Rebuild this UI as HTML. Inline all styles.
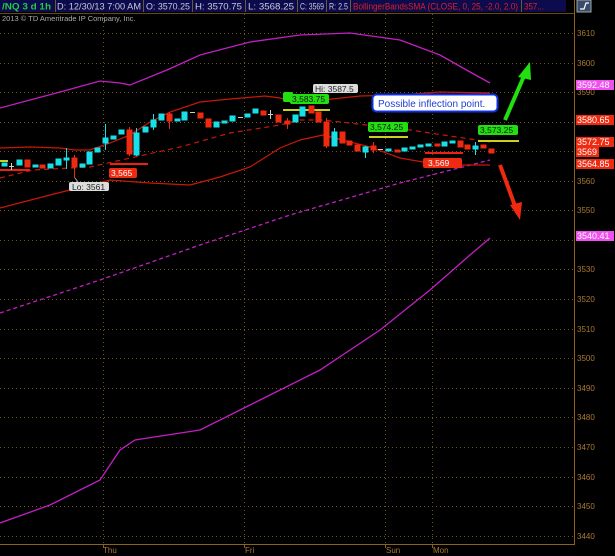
<!DOCTYPE html>
<html><head><meta charset="utf-8"><style>
html,body{margin:0;padding:0;background:#000;width:615px;height:556px;overflow:hidden}
svg{display:block;font-family:"Liberation Sans",sans-serif}
</style></head><body>
<svg width="615" height="556" viewBox="0 0 615 556" xmlns="http://www.w3.org/2000/svg">
<rect width="615" height="556" fill="#000"/>
<rect x="0" y="0" width="566" height="12" fill="#0b0b4e"/>
<g stroke="#6a5a3a" stroke-width="1">
<line x1="55.5" y1="0" x2="55.5" y2="12"/><line x1="143.5" y1="0" x2="143.5" y2="12"/><line x1="192.5" y1="0" x2="192.5" y2="12"/><line x1="245.5" y1="0" x2="245.5" y2="12"/><line x1="297.5" y1="0" x2="297.5" y2="12"/><line x1="326.5" y1="0" x2="326.5" y2="12"/><line x1="350.5" y1="0" x2="350.5" y2="12"/><line x1="521.5" y1="0" x2="521.5" y2="12"/>
</g>
<g font-size="9" fill="#c8c8d8">
<text x="2" y="9.5" fill="#22cc44" font-weight="bold" textLength="49" lengthAdjust="spacingAndGlyphs">/NQ 3 d 1h</text>
<text x="57" y="9.5" textLength="84" lengthAdjust="spacingAndGlyphs">D: 12/30/13 7:00 AM</text>
<text x="146" y="9.5" textLength="44" lengthAdjust="spacingAndGlyphs">O: 3570.25</text>
<text x="195" y="9.5" textLength="47" lengthAdjust="spacingAndGlyphs">H: 3570.75</text>
<text x="248" y="9.5" textLength="46" lengthAdjust="spacingAndGlyphs">L: 3568.25</text>
<text x="300" y="9.5" textLength="24" lengthAdjust="spacingAndGlyphs">C: 3569</text>
<text x="329" y="9.5" textLength="19" lengthAdjust="spacingAndGlyphs">R: 2.5</text>
<text x="353" y="9.5" fill="#e02020" textLength="165" lengthAdjust="spacingAndGlyphs">BollingerBandsSMA (CLOSE, 0, 25, -2.0, 2.0)</text>
<text x="524" y="9.5" fill="#e02020" textLength="20" lengthAdjust="spacingAndGlyphs">357...</text>
</g>
<rect x="577" y="0" width="14" height="12" fill="#3a4a6a" stroke="#9aa" stroke-width="1"/>
<path d="M580 9 L584 9 L586 3 L589 3" stroke="#fff" fill="none" stroke-width="1.2"/>
<line x1="0" y1="13.5" x2="574" y2="13.5" stroke="#6a4a10"/>
<text x="2" y="21" font-size="7.5" fill="#aaa">2013 © TD Ameritrade IP Company, Inc.</text>
<g stroke="#6a5420" stroke-width="1" stroke-dasharray="1,3">
<line x1="0" y1="33.5" x2="574" y2="33.5"/><line x1="0" y1="63.5" x2="574" y2="63.5"/><line x1="0" y1="92.5" x2="574" y2="92.5"/><line x1="0" y1="122.5" x2="574" y2="122.5"/><line x1="0" y1="151.5" x2="574" y2="151.5"/><line x1="0" y1="181.5" x2="574" y2="181.5"/><line x1="0" y1="210.5" x2="574" y2="210.5"/><line x1="0" y1="240.5" x2="574" y2="240.5"/><line x1="0" y1="269.5" x2="574" y2="269.5"/><line x1="0" y1="299.5" x2="574" y2="299.5"/><line x1="0" y1="329.5" x2="574" y2="329.5"/><line x1="0" y1="358.5" x2="574" y2="358.5"/><line x1="0" y1="388.5" x2="574" y2="388.5"/><line x1="0" y1="417.5" x2="574" y2="417.5"/><line x1="0" y1="447.5" x2="574" y2="447.5"/><line x1="0" y1="477.5" x2="574" y2="477.5"/><line x1="0" y1="506.5" x2="574" y2="506.5"/><line x1="0" y1="536.5" x2="574" y2="536.5"/>
<line x1="103.5" y1="14" x2="103.5" y2="544"/><line x1="244.5" y1="14" x2="244.5" y2="544"/><line x1="385.5" y1="14" x2="385.5" y2="544"/><line x1="432.5" y1="14" x2="432.5" y2="544"/>
</g>
<line x1="574.5" y1="0" x2="574.5" y2="545" stroke="#8a6418"/>
<line x1="0" y1="544.5" x2="575" y2="544.5" stroke="#8a6418"/>
<g stroke="#8a6418"><line x1="103.5" y1="544" x2="103.5" y2="548"/><line x1="244.5" y1="544" x2="244.5" y2="548"/><line x1="385.5" y1="544" x2="385.5" y2="548"/><line x1="432.5" y1="544" x2="432.5" y2="548"/></g>
<g font-size="8" fill="#a87a30">
<text x="103" y="553">Thu</text><text x="245" y="553">Fri</text><text x="386" y="553">Sun</text><text x="433" y="553">Mon</text>
<text x="577" y="36">3610</text><text x="577" y="66">3600</text><text x="577" y="95">3590</text><text x="577" y="184">3560</text><text x="577" y="213">3550</text><text x="577" y="272">3530</text><text x="577" y="302">3520</text><text x="577" y="332">3510</text><text x="577" y="361">3500</text><text x="577" y="391">3490</text><text x="577" y="420">3480</text><text x="577" y="450">3470</text><text x="577" y="480">3460</text><text x="577" y="509">3450</text><text x="577" y="539">3440</text>
</g>
<g fill="none" stroke="#c020c0" stroke-width="1.3">
<polyline points="0,108 60,92 100,81 120,83 130,85 167,70 200,55 250,42 300,35 350,33 400,40 440,55 470,72 490,83"/>
<polyline points="0,313 100,280 200,245 290,215 400,183 490,160" stroke-dasharray="4,3"/>
<polyline points="0,523 50,505 100,480 120,450 135,440 200,430 260,400 320,370 380,330 430,290 470,255 490,238"/>
</g>
<g fill="none" stroke="#c81808" stroke-width="1.2">
<polyline points="0,148 30,147 60,148 75,150 90,150 110,143 130,135 150,122 170,112 200,102 230,99 265,96 280,98 300,103 323,100 360,96 400,95 440,92 490,93"/>
<polyline points="0,178 33,170 90,167 180,147 230,133 280,125 300,120 323,120 410,130 490,142" stroke-dasharray="5,4"/>
<polyline points="0,208 50,195 70,190 110,180 150,183 190,185 220,177 250,167 280,148 300,140 323,135 370,147 400,158 440,165 490,165"/>
</g>
<g stroke-width="2">
<line x1="0" y1="161" x2="8" y2="161" stroke="#c8d020"/>
<line x1="0" y1="170" x2="30" y2="170" stroke="#f02010"/>
<line x1="110" y1="164" x2="148" y2="164" stroke="#f02010"/>
<line x1="283" y1="110" x2="330" y2="110" stroke="#c8d020"/>
<line x1="369" y1="137" x2="408" y2="137" stroke="#c8d020"/>
<line x1="478" y1="141" x2="519" y2="141" stroke="#c8d020"/>
<line x1="425" y1="153" x2="463" y2="153" stroke="#f02010"/>
</g>
<g stroke-width="1">
<g fill="#18e0e8" stroke="#18e0e8">
<rect x="2" y="163" width="5" height="3"/><rect x="17" y="160" width="5" height="5"/><rect x="33" y="165" width="5" height="2"/><rect x="48" y="164" width="5" height="4"/><rect x="56" y="159" width="5" height="6"/><rect x="64" y="158" width="5" height="2"/><line x1="66.5" y1="148" x2="66.5" y2="169"/><rect x="80" y="164" width="5" height="3"/><rect x="87" y="152" width="5" height="12"/><rect x="95" y="148" width="5" height="4"/><rect x="103" y="138" width="5" height="5"/><line x1="105.5" y1="124" x2="105.5" y2="150"/><rect x="111" y="136" width="5" height="3"/><rect x="119" y="130" width="5" height="4"/><rect x="134" y="133" width="5" height="22"/><line x1="136.5" y1="128" x2="136.5" y2="156"/><rect x="143" y="127" width="5" height="5"/><rect x="151" y="120" width="5" height="7"/><line x1="153.5" y1="114" x2="153.5" y2="130"/><rect x="159" y="114" width="5" height="6"/><rect x="175" y="119" width="5" height="2"/><rect x="182" y="112" width="5" height="8"/><rect x="214" y="122" width="5" height="5"/><rect x="222" y="121" width="5" height="2"/><rect x="230" y="116" width="5" height="5"/><rect x="245" y="114" width="5" height="3"/><rect x="253" y="109" width="5" height="4"/><rect x="293" y="115" width="5" height="7"/><rect x="300" y="107" width="5" height="9"/><rect x="332" y="132" width="5" height="14"/><line x1="334.5" y1="128" x2="334.5" y2="146"/><rect x="363" y="147" width="5" height="5"/><line x1="365.5" y1="146" x2="365.5" y2="158"/><rect x="386" y="149" width="5" height="2"/><rect x="402" y="148" width="5" height="3"/><rect x="410" y="147" width="5" height="2"/><rect x="418" y="145" width="5" height="2"/><rect x="426" y="144" width="5" height="2"/><rect x="442" y="142" width="5" height="4"/><rect x="450" y="141" width="5" height="2"/><rect x="473" y="146" width="5" height="3"/><line x1="475.5" y1="142" x2="475.5" y2="155"/>
</g>
<g fill="#ee2a10" stroke="#ee2a10">
<rect x="25" y="160" width="5" height="7"/><rect x="40" y="165" width="5" height="3"/><rect x="72" y="158" width="5" height="9"/><line x1="74.5" y1="155" x2="74.5" y2="178"/><rect x="127" y="130" width="5" height="24"/><line x1="129.5" y1="127" x2="129.5" y2="156"/><rect x="167" y="114" width="5" height="7"/><line x1="169.5" y1="112" x2="169.5" y2="129"/><rect x="198" y="113" width="5" height="5"/><rect x="206" y="119" width="5" height="8"/><rect x="261" y="111" width="5" height="4"/><rect x="276" y="115" width="5" height="7"/><rect x="285" y="121" width="5" height="3"/><line x1="287.5" y1="118" x2="287.5" y2="129"/><rect x="309" y="106" width="5" height="7"/><rect x="316" y="112" width="5" height="10"/><rect x="324" y="122" width="5" height="24"/><line x1="326.5" y1="118" x2="326.5" y2="148"/><rect x="340" y="132" width="5" height="11"/><rect x="347" y="141" width="5" height="4"/><rect x="355" y="145" width="5" height="6"/><rect x="371" y="146" width="5" height="4"/><line x1="373.5" y1="142" x2="373.5" y2="153"/><rect x="395" y="150" width="5" height="2"/><rect x="435" y="144" width="5" height="2"/><rect x="458" y="141" width="5" height="6"/><rect x="465" y="145" width="5" height="4"/><rect x="481" y="145" width="5" height="3"/><rect x="489" y="149" width="5" height="4"/>
</g>
<g stroke="#ccc"><line x1="9" y1="166.5" x2="14" y2="166.5"/><line x1="11.5" y1="163" x2="11.5" y2="170"/><line x1="190" y1="112.5" x2="195" y2="112.5"/><line x1="238" y1="117.5" x2="243" y2="117.5"/><line x1="268" y1="114.5" x2="273" y2="114.5"/><line x1="270.5" y1="110" x2="270.5" y2="119"/><line x1="378" y1="149.5" x2="383" y2="149.5"/></g>
</g>
<g font-size="8.5">
<rect x="69" y="182" width="40" height="9" rx="2" fill="#ddd"/><text x="72" y="190" fill="#222">Lo: 3561</text>
<line x1="75" y1="178" x2="78" y2="182" stroke="#aaa"/>
<rect x="109" y="168" width="28" height="10" rx="2" fill="#f02a10"/><text x="111" y="176" fill="#fff">3,565</text>
<rect x="313" y="84" width="45" height="9" rx="2" fill="#ddd"/><text x="315" y="92" fill="#222">Hi: 3587.5</text>
<rect x="283" y="92" width="10" height="10" rx="2" fill="#22e010"/>
<rect x="290" y="94" width="39" height="10" rx="2" fill="#22e010"/><text x="292" y="102" fill="#111">3,583.75</text>
<rect x="368" y="122" width="40" height="10" rx="2" fill="#22e010"/><text x="370" y="130" fill="#111">3,574.25</text>
<rect x="478" y="125" width="40" height="10" rx="2" fill="#22e010"/><text x="480" y="133" fill="#111">3,573.25</text>
<rect x="423" y="158" width="39" height="10" rx="2" fill="#f02a10"/><text x="428" y="166" fill="#fff">3,569</text>
</g>
<rect x="372.5" y="94.5" width="125" height="17" rx="4" fill="#fff" stroke="#1030e0" stroke-width="2"/>
<text x="378" y="107" font-size="10" fill="#2040d0">Possible inflection point.</text>
<line x1="505" y1="120" x2="524" y2="76" stroke="#22e010" stroke-width="4"/>
<polygon points="530,62 518,77 531,80" fill="#22e010"/>
<line x1="500" y1="165" x2="515" y2="206" stroke="#f02a10" stroke-width="4"/>
<polygon points="520,220 510,205 522,202" fill="#f02a10"/>
<g font-size="9">
<rect x="576" y="80" width="38" height="10" fill="#f050f0"/><text x="577" y="88" fill="#fff">3592.48</text>
<rect x="576" y="115" width="38" height="10" fill="#f02a10"/><text x="577" y="123" fill="#fff">3580.65</text>
<rect x="576" y="137" width="38" height="10" fill="#f02a10"/><text x="577" y="145" fill="#fff">3572.75</text>
<rect x="576" y="147" width="23" height="10" fill="#f02a10"/><text x="577" y="155" fill="#fff">3569</text>
<rect x="576" y="159" width="38" height="10" fill="#f02a10"/><text x="577" y="167" fill="#fff">3564.85</text>
<rect x="576" y="231" width="38" height="10" fill="#f050f0"/><text x="577" y="239" fill="#fff">3540.41</text>
</g>
</svg>
</body></html>
